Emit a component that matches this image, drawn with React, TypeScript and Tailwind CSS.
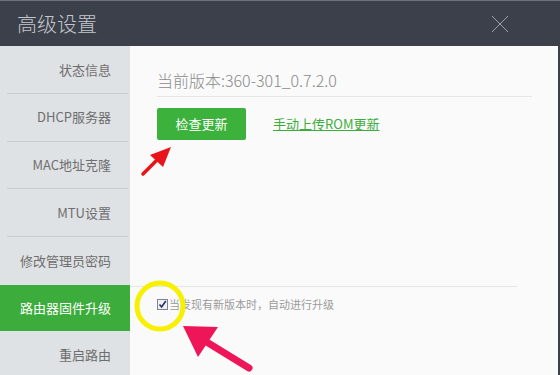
const menu = ["状态信息", "DHCP服务器", "MAC地址克隆", "MTU设置", "修改管理员密码", "路由器固件升级", "重启路由"];
const active = 5;

function Annotations() {
  return (
    <svg className="absolute inset-0 pointer-events-none" width="560" height="375" viewBox="0 0 560 375">
      {/* red arrow near the button */}
      <line x1="143" y1="174" x2="160" y2="157" stroke="#e8141a" strokeWidth="3.5" strokeLinecap="round" />
      <polygon points="171,147 150,155 163,167" fill="#e8141a" />
      {/* yellow circle round the checkbox */}
      <circle cx="160" cy="306" r="23" fill="none" stroke="#f7f000" strokeWidth="5" />
      {/* pink arrow */}
      <line x1="249" y1="368" x2="205" y2="341" stroke="#ee1559" strokeWidth="7" strokeLinecap="round" />
      <polygon points="183,326 218,327 198,357" fill="#ee1559" />
    </svg>
  );
}

export default function App() {
  return (
    <div className="relative w-[560px] h-[375px] overflow-hidden flex flex-col bg-[#3b404b] font-['Noto_Sans_CJK_SC','Noto_Sans',sans-serif]">
      <header className="h-[46px] shrink-0 border-t border-[#6d717a] flex items-center justify-between pl-[17px] pr-[51px]">
        <h1 className="text-[20px] leading-[24px] font-light text-[#c4c7cd]">高级设置</h1>
        <svg width="18" height="18" viewBox="0 0 18 18" aria-hidden="true">
          <path d="M1 1 L17 17 M17 1 L1 17" stroke="#9ea2aa" strokeWidth="1" />
        </svg>
      </header>

      <div className="flex flex-1 min-h-0 pr-[2px]">
        <nav className="w-[130px] shrink-0 bg-[#dfe2e5] flex flex-col">
          {menu.map((label, i) => (
            <div
              key={label}
              className={
                i === active
                  ? "h-[46px] shrink-0 bg-[#3cad3c] flex items-center justify-end pr-[19px] text-[13px] text-white"
                  : "h-[47.8px] shrink-0 pl-[7px] pr-[2px]"
              }
            >
              {i === active ? (
                label
              ) : (
                <div
                  className={`h-full flex items-center justify-end pr-[17px] text-[13px] text-[#6e6e6e] ${
                    i < active - 1 ? "border-b border-[#c9cdd1]" : ""
                  }`}
                >
                  {label}
                </div>
              )}
            </div>
          ))}
        </nav>

        <main className="flex-1 bg-[#fafafa] flex flex-col">
          <div className="ml-[27px] mr-[26px] pt-[24px] pb-[6px] border-b border-[#e6e6e6]">
            <p className="text-[16px] leading-[20px] font-light text-[#8a8a8a]">当前版本:360-301_0.7.2.0</p>
          </div>
          <div className="ml-[27px] mt-[11px] flex items-center gap-[27px]">
            <button
              type="button"
              className="w-[89px] h-[32px] rounded-[2px] bg-[#3cb23c] text-white text-[13px]"
            >
              检查更新
            </button>
            <a href="#" className="text-[13px] text-[#3cad3c] underline">
              手动上传ROM更新
            </a>
          </div>

          <div className="mt-[146px] mr-[41px] border-t border-[#e6e6e6]" />
          <label className="ml-[27px] mt-[11px] flex items-center text-[11px] leading-[12px] text-[#9a9a9a]">
            <span className="w-[11px] h-[11px] shrink-0 border border-[#7d8294] bg-[#eef0f5] flex items-center justify-center">
              <svg width="9" height="9" viewBox="0 0 9 9" aria-hidden="true">
                <path d="M1.5 4.5 L3.6 7 L7.8 1" fill="none" stroke="#283058" strokeWidth="1.6" />
              </svg>
            </span>
            <span className="ml-[1px]">当发现有新版本时，自动进行升级</span>
          </label>
        </main>
      </div>

      <Annotations />
    </div>
  );
}
